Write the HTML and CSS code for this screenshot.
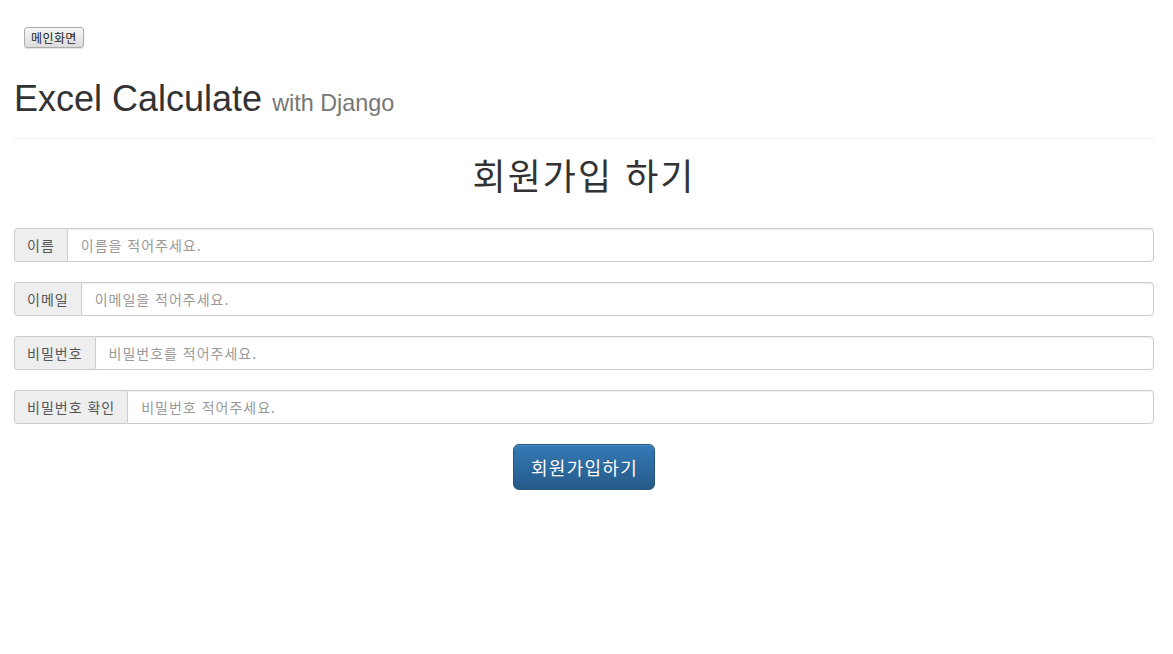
FILE: index.html
```html
<!DOCTYPE html>
<html lang="ko">
<head>
<meta charset="utf-8">
<title>Excel Calculate</title>
<link rel="stylesheet" href="styles.css">
</head>
<body>
<div class="page">
  <div class="topbar">
    <button class="home-btn" type="button">메인화면</button>
  </div>
  <div class="page-header">
    <h1 class="brand">Excel Calculate <small>with Django</small></h1>
  </div>
  <h1 class="signup-title">회원가입 하기</h1>
  <form class="signup-form">
    <div class="input-group">
      <span class="addon">이름</span>
      <input class="field" type="text" placeholder="이름을 적어주세요.">
    </div>
    <div class="input-group">
      <span class="addon">이메일</span>
      <input class="field" type="text" placeholder="이메일을 적어주세요.">
    </div>
    <div class="input-group">
      <span class="addon">비밀번호</span>
      <input class="field" type="password" placeholder="비밀번호를 적어주세요.">
    </div>
    <div class="input-group">
      <span class="addon">비밀번호 확인</span>
      <input class="field" type="password" placeholder="비밀번호 적어주세요.">
    </div>
    <div class="actions">
      <button class="btn-primary" type="button">회원가입하기</button>
    </div>
  </form>
</div>
</body>
</html>
```

FILE: styles.css
```css
* {
  box-sizing: border-box;
}

html, body {
  margin: 0;
  padding: 0;
  background: #fff;
}

body {
  font-family: "Liberation Sans", Arial, "Noto Sans CJK KR", sans-serif;
  font-size: 14px;
  line-height: 1.42857;
  color: #333;
}

.page {
  padding: 0 19px 0 14px;
}

.topbar {
  padding: 27px 0 0 10px;
  display: flex;
}

.home-btn {
  height: 21px;
  padding: 0 6px;
  font-family: "Noto Sans CJK KR", sans-serif;
  font-size: 12px;
  font-weight: 400;
  letter-spacing: 0.4px;
  line-height: 19px;
  color: #222;
  background: linear-gradient(to bottom, #f6f6f6 0%, #e9e9e9 50%, #dcdcdc 100%);
  border: 1px solid #acacac;
  border-radius: 3px;
  box-shadow: 0 1px 1px rgba(0,0,0,0.12);
}

.page-header {
  margin: 31px 0 20px;
  padding-bottom: 9px;
  border-bottom: 1px solid #eee;
}

.brand {
  margin: 0 0 10px;
  font-family: "Liberation Sans", Arial, sans-serif;
  font-size: 36px;
  font-weight: 400;
  line-height: 1.1;
  color: #333;
}

.brand small {
  font-size: 65%;
  font-weight: 400;
  color: #777;
}

.signup-title {
  margin: -4px 0 15px;
  text-align: center;
  font-family: "Noto Sans CJK KR", sans-serif;
  font-size: 36px;
  font-weight: 400;
  letter-spacing: 2px;
  line-height: 1.1;
  color: #333;
}

.signup-form {
  padding-top: 19px;
}

.input-group {
  display: flex;
  height: 34px;
  margin-bottom: 20px;
}

.addon {
  display: flex;
  align-items: center;
  padding: 0 12px;
  font-family: "Noto Sans CJK KR", sans-serif;
  font-size: 14px;
  letter-spacing: 1px;
  color: #555;
  background: #eee;
  border: 1px solid #ccc;
  border-right: 0;
  border-radius: 4px 0 0 4px;
  white-space: nowrap;
}

.field {
  flex: 1;
  min-width: 0;
  height: 34px;
  padding: 6px 12px 6px 13px;
  font-family: "Noto Sans CJK KR", sans-serif;
  font-size: 14px;
  letter-spacing: 1px;
  color: #555;
  background: #fff;
  border: 1px solid #ccc;
  border-radius: 0 4px 4px 0;
  box-shadow: inset 0 1px 1px rgba(0,0,0,0.075);
  outline: none;
}

.field::placeholder {
  color: #999;
}

.actions {
  display: flex;
  justify-content: center;
}

.btn-primary {
  height: 46px;
  padding: 10px 16px 10px 17px;
  font-family: "Noto Sans CJK KR", sans-serif;
  font-size: 18px;
  letter-spacing: 1.3px;
  line-height: 24px;
  color: #fff;
  background: linear-gradient(to bottom, #337ab7 0%, #265a88 100%);
  border: 1px solid #245580;
  border-radius: 6px;
  box-shadow: inset 0 1px 0 rgba(255,255,255,0.15), 0 1px 1px rgba(0,0,0,0.075);
  text-shadow: 0 -1px 0 rgba(0,0,0,0.2);
}
```
